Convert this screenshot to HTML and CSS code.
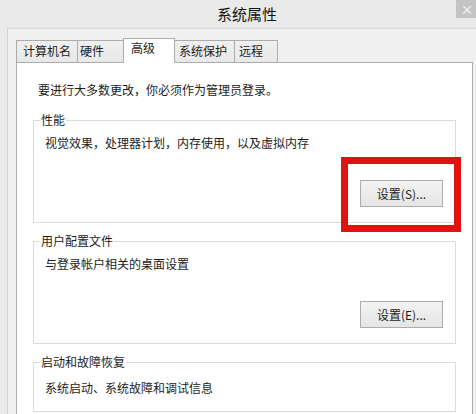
FILE: index.html
```html
<!DOCTYPE html>
<html lang="zh-CN">
<head>
<meta charset="utf-8">
<title>系统属性</title>
<link rel="stylesheet" href="styles.css">
</head>
<body>
<div class="window">
  <div class="titlebar">
    <span class="title">系统属性</span>
    <div class="close">×</div>
  </div>
  <div class="client">
    <div class="tabs">
      <div class="tab t1">计算机名</div>
      <div class="tab t2">硬件</div>
      <div class="tab t3 active">高级</div>
      <div class="tab t4">系统保护</div>
      <div class="tab t5">远程</div>
    </div>
    <div class="panel">
      <p class="note">要进行大多数更改，你必须作为管理员登录。</p>
      <fieldset class="group">
        <legend>性能</legend>
        <p class="desc">视觉效果，处理器计划，内存使用，以及虚拟内存</p>
        <div class="actions"><button class="btn">设置(S)...</button></div>
      </fieldset>
      <fieldset class="group profile">
        <legend>用户配置文件</legend>
        <p class="desc">与登录帐户相关的桌面设置</p>
        <div class="actions"><button class="btn">设置(E)...</button></div>
      </fieldset>
      <fieldset class="group startup">
        <legend>启动和故障恢复</legend>
        <p class="desc">系统启动、系统故障和调试信息</p>
      </fieldset>
    </div>
  </div>
</div>
<div class="highlight"></div>
</body>
</html>
```

FILE: styles.css
```css
html, body {
  margin: 0;
  height: 414px;
  overflow: hidden;
}
body {
  position: relative;
  width: 476px;
  background: #eaeaea;
  font-family: "Noto Sans CJK SC", "Microsoft YaHei", sans-serif;
  font-size: 12px;
  color: #1c1c1c;
}
.titlebar {
  position: relative;
  height: 28px;
  box-sizing: border-box;
  padding-left: 18px;
  display: flex;
  justify-content: center;
  align-items: center;
}
.title {
  font-size: 15px;
  line-height: 18px;
  color: #111;
}
.close {
  position: absolute;
  left: 456px;
  top: 0;
  width: 20px;
  height: 18px;
  padding-left: 2px;
  box-sizing: border-box;
  background: #c4c4c4;
  color: #fff;
  font-size: 13px;
  line-height: 18px;
  text-align: center;
}
.client {
  margin-left: 7px;
  border-left: 1px solid #d2d2d2;
  border-top: 1px solid #dadada;
  background: #f0f0f0;
  padding: 9px 0 0 8px;
  height: 400px;
}
.tabs {
  display: flex;
  align-items: flex-end;
  height: 24px;
}
.tab {
  position: relative;
  box-sizing: border-box;
  height: 22px;
  line-height: 20px;
  border: 1px solid #acacac;
  border-bottom: none;
  background: linear-gradient(#f0f0f0, #e8e8e8);
  white-space: nowrap;
  margin-left: -1px;
}
.tab.t1 { width: 62px; padding-left: 6px; margin-left: 0; }
.tab.t2 { width: 47px; padding-left: 2px; }
.tab.t3 { width: 52px; padding-left: 7px; }
.tab.t4 { width: 61px; padding-left: 4px; }
.tab.t5 { width: 44px; padding-left: 4px; }
.tab.active {
  height: 25px;
  line-height: 18px;
  margin-bottom: -1px;
  background: #fff;
  z-index: 1;
}
.panel {
  box-sizing: border-box;
  width: 457px;
  height: 400px;
  border: 1px solid #acacac;
  background: #fff;
  padding: 19px 16px 0 16px;
}
.note {
  margin: 0 0 14px 5px;
  line-height: 16px;
}
.group {
  margin: 0 0 10px 0;
  padding: 7px 12px 15px 11px;
  border: 1px solid #dcdcdc;
  min-width: 0;
}
.group.startup {
  padding-top: 10px;
}
.group legend {
  padding: 0 1px;
  margin-left: -5px;
  line-height: 16px;
  font-size: 12px;
}
.desc {
  margin: 0;
  line-height: 16px;
}
.actions {
  display: flex;
  justify-content: flex-end;
  margin-top: 29px;
}
.btn {
  width: 83px;
  height: 27px;
  padding: 0;
  border: 1px solid #adadad;
  background: linear-gradient(#f3f3f3, #e5e5e5);
  font-family: "Noto Sans CJK SC", "Microsoft YaHei", sans-serif;
  font-size: 12px;
  color: #1c1c1c;
}
.highlight {
  position: absolute;
  left: 341px;
  top: 157px;
  width: 120px;
  height: 75px;
  box-sizing: border-box;
  border: 7px solid #e01212;
}
```
